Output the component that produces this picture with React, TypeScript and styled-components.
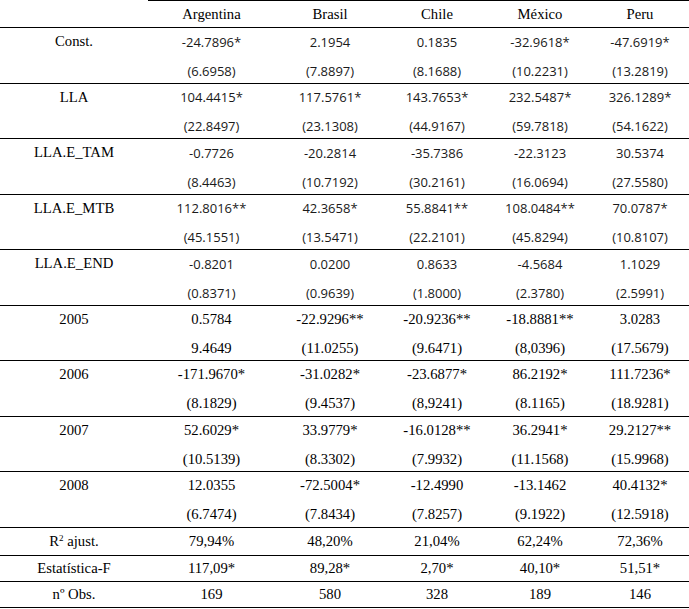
import React from 'react'
import styled, { createGlobalStyle } from 'styled-components'

const GlobalStyle = createGlobalStyle`
  html, body {
    margin: 0;
    padding: 0;
    background: #ffffff;
  }
`

const Table = styled.table`
  width: 689px;
  table-layout: fixed;
  border-collapse: collapse;
  border-spacing: 0;
  font-family: 'Liberation Serif', 'Times New Roman', serif;
  font-size: 14.7px;
  color: #000;
`

const Row = styled.tr<{ $height: number; $rule?: boolean }>`
  height: ${({ $height }) => $height}px;
  border-bottom: ${({ $rule }) => ($rule ? '1px solid #000' : 'none')};
`

const HeadCell = styled.th<{ $blank?: boolean }>`
  padding: 0;
  font-weight: normal;
  text-align: center;
  vertical-align: middle;
  border-bottom: 1px solid #000;
  border-top: ${({ $blank }) => ($blank ? 'none' : '1px solid #000')};
`

const Label = styled.td`
  padding: 0;
  text-align: center;
  vertical-align: middle;
  white-space: nowrap;
`

const Value = styled.td<{ $sans?: boolean; $lower?: boolean }>`
  padding: ${({ $lower }) => ($lower ? '3px 0 0' : '0')};
  text-align: center;
  vertical-align: middle;
  white-space: nowrap;
  font-family: ${({ $sans }) =>
    $sans
      ? "'Open Sans', 'Liberation Sans', sans-serif"
      : "'Liberation Serif', 'Times New Roman', serif"};
  font-size: ${({ $sans }) => ($sans ? '13px' : '14.7px')};
  color: ${({ $sans }) => ($sans ? '#1a1a1a' : '#000')};
`

const Sup = styled.sup`
  font-size: 9px;
  vertical-align: 5px;
  line-height: 0;
`

const countries = ['Argentina', 'Brasil', 'Chile', 'México', 'Peru']
const widths = [148, 127, 110, 104, 102, 98]

type Group = { label: string; sans?: boolean; est: string[]; se: string[] }

const groups: Group[] = [
  {
    label: 'Const.',
    sans: true,
    est: ['-24.7896*', '2.1954', '0.1835', '-32.9618*', '-47.6919*'],
    se: ['(6.6958)', '(7.8897)', '(8.1688)', '(10.2231)', '(13.2819)'],
  },
  {
    label: 'LLA',
    sans: true,
    est: ['104.4415*', '117.5761*', '143.7653*', '232.5487*', '326.1289*'],
    se: ['(22.8497)', '(23.1308)', '(44.9167)', '(59.7818)', '(54.1622)'],
  },
  {
    label: 'LLA.E_TAM',
    sans: true,
    est: ['-0.7726', '-20.2814', '-35.7386', '-22.3123', '30.5374'],
    se: ['(8.4463)', '(10.7192)', '(30.2161)', '(16.0694)', '(27.5580)'],
  },
  {
    label: 'LLA.E_MTB',
    sans: true,
    est: ['112.8016**', '42.3658*', '55.8841**', '108.0484**', '70.0787*'],
    se: ['(45.1551)', '(13.5471)', '(22.2101)', '(45.8294)', '(10.8107)'],
  },
  {
    label: 'LLA.E_END',
    sans: true,
    est: ['-0.8201', '0.0200', '0.8633', '-4.5684', '1.1029'],
    se: ['(0.8371)', '(0.9639)', '(1.8000)', '(2.3780)', '(2.5991)'],
  },
  {
    label: '2005',
    est: ['0.5784', '-22.9296**', '-20.9236**', '-18.8881**', '3.0283'],
    se: ['9.4649', '(11.0255)', '(9.6471)', '(8,0396)', '(17.5679)'],
  },
  {
    label: '2006',
    est: ['-171.9670*', '-31.0282*', '-23.6877*', '86.2192*', '111.7236*'],
    se: ['(8.1829)', '(9.4537)', '(8,9241)', '(8.1165)', '(18.9281)'],
  },
  {
    label: '2007',
    est: ['52.6029*', '33.9779*', '-16.0128**', '36.2941*', '29.2127**'],
    se: ['(10.5139)', '(8.3302)', '(7.9932)', '(11.1568)', '(15.9968)'],
  },
  {
    label: '2008',
    est: ['12.0355', '-72.5004*', '-12.4990', '-13.1462', '40.4132*'],
    se: ['(6.7474)', '(7.8434)', '(7.8257)', '(9.1922)', '(12.5918)'],
  },
]

const stats: { label: React.ReactNode; values: string[]; height: number }[] = [
  {
    label: (
      <>
        R<Sup>2</Sup> ajust.
      </>
    ),
    values: ['79,94%', '48,20%', '21,04%', '62,24%', '72,36%'],
    height: 28,
  },
  {
    label: 'Estatística-F',
    values: ['117,09*', '89,28*', '2,70*', '40,10*', '51,51*'],
    height: 26,
  },
  {
    label: 'nº Obs.',
    values: ['169', '580', '328', '189', '146'],
    height: 26,
  },
]

function App() {
  return (
    <>
      <GlobalStyle />
      <Table>
        <colgroup>
          {widths.map((w, i) => (
            <col key={i} style={{ width: w }} />
          ))}
        </colgroup>
        <thead>
          <Row $height={27}>
            <HeadCell $blank />
            {countries.map((c) => (
              <HeadCell key={c}>{c}</HeadCell>
            ))}
          </Row>
        </thead>
        <tbody>
          {groups.map((g) => (
            <React.Fragment key={g.label}>
              <Row $height={28}>
                <Label>{g.label}</Label>
                {g.est.map((v, i) => (
                  <Value key={i} $sans={g.sans}>
                    {v}
                  </Value>
                ))}
              </Row>
              <Row $height={27.5} $rule>
                <Label />
                {g.se.map((v, i) => (
                  <Value key={i} $sans={g.sans} $lower>
                    {v}
                  </Value>
                ))}
              </Row>
            </React.Fragment>
          ))}
          {stats.map((s, idx) => (
            <Row key={idx} $height={s.height} $rule>
              <Label>{s.label}</Label>
              {s.values.map((v, i) => (
                <Value key={i}>{v}</Value>
              ))}
            </Row>
          ))}
        </tbody>
      </Table>
    </>
  )
}

export default App
